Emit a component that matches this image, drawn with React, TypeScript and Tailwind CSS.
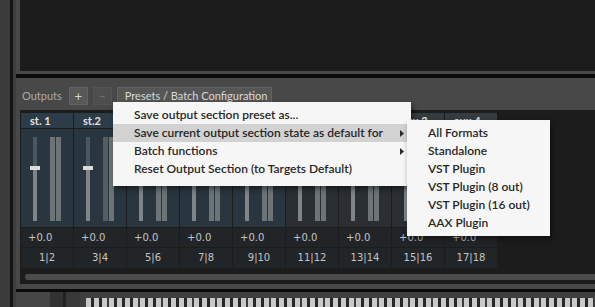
import React from 'react';

const channels = [
  { name: 'st. 1', out: '1|2', blue: true },
  { name: 'st.2', out: '3|4', blue: true },
  { name: 'st.3', out: '5|6', blue: true },
  { name: 'st.4', out: '7|8', blue: true },
  { name: 'st.5', out: '9|10', blue: true },
  { name: 'aux 1', out: '11|12', blue: false },
  { name: 'aux 2', out: '13|14', blue: false },
  { name: 'aux 3', out: '15|16', blue: false },
  { name: 'aux 4', out: '17|18', blue: false },
];

const menuItems = [
  { label: 'Save output section preset as...', sub: false },
  { label: 'Save current output section state as default for', sub: true, active: true },
  { label: 'Batch functions', sub: true },
  { label: 'Reset Output Section (to Targets Default)', sub: false },
];

const formats = ['All Formats', 'Standalone', 'VST Plugin', 'VST Plugin (8 out)', 'VST Plugin (16 out)', 'AAX Plugin'];

// one octave seen from the top: w = white, b = black key, g = thin gap
const octave = ['w', 'b', 'w', 'b', 'w', 'g', 'w', 'b', 'w', 'b', 'w', 'b', 'w', 'g'];

const Fader = ({ blue, dim }: { blue: boolean; dim?: boolean }) => (
  <div className={`flex h-[98px] pt-[8px] pl-[12px] ${blue ? 'bg-[#29363f]' : 'bg-[#2b2f33]'}`}>
    <div className="relative flex h-[84px] w-[4px] flex-col">
      <div className={`h-[30px] ${blue ? 'bg-[#4b575f]' : 'bg-[#55595c]'}`} />
      <div className="flex-1 bg-[#7e8487]" />
      <div className="absolute left-[-3px] top-[29px] h-[4px] w-[10px] bg-[#dcdcdc]" />
    </div>
    <div className="ml-[13px] flex h-[84px] gap-px">
      <div className={`w-[5px] ${dim ? 'bg-[#535d64]' : 'bg-[#6c7478]'}`} />
      <div className="w-[5px] bg-[#6c7478]" />
    </div>
  </div>
);

export default function App() {
  return (
    <div className="relative flex h-[307px] w-[595px] overflow-hidden bg-[#3a3a3a] font-['Lato',sans-serif]">
      <div className="w-[10px] shrink-0 bg-[#3b3b3b]" />
      <div className="w-[3px] shrink-0 bg-[#141414]" />
      <div className="flex min-w-0 flex-1 flex-col bg-[#3d3d3d] pl-[3px]">
        {/* top rack */}
        <div className="h-[74px] bg-[#484848] pb-[3px] pl-[4px]">
          <div className="h-full bg-[#1c1c1c]" />
        </div>
        <div className="h-[4px] bg-[#0b0b0b]" />

        {/* outputs section */}
        <div className="flex h-[211px] flex-col bg-[#484848]">
          <div className="flex h-[32px] items-start gap-[5px] pl-[6px] pt-[9px]">
            <span className="mr-[2px] whitespace-nowrap pt-[2px] text-[11px] leading-[14px] text-[#a9a9a9]">Outputs</span>
            <div className="flex h-[18px] w-[19px] shrink-0 items-center justify-center border border-[#626262] bg-[#585858] text-[13px] leading-none text-[#d6d6d6]">+</div>
            <div className="flex h-[18px] w-[19px] shrink-0 items-center justify-center border border-[#545454] bg-[#4e4e4e] text-[12px] leading-none text-[#777]">–</div>
            <div className="flex h-[19px] w-[155px] shrink-0 items-center whitespace-nowrap border border-[#626262] bg-[#565656] pl-[7px] text-[11px] text-[#d8d8d8]">
              Presets / Batch Configuration
              <svg className="ml-[7px]" width="7" height="4" viewBox="0 0 7 4"><path d="M0 0h7L3.5 4z" fill="#dcdcdc" /></svg>
            </div>
          </div>

          <div className="ml-[4px] flex h-[174px] flex-col bg-[#1c1c1c] pl-px pt-[3px]">
            <div className="grid w-[476px] grid-cols-[repeat(9,52px)] gap-x-px gap-y-px">
              {channels.map((c) => (
                <div key={c.name} className={`h-[15px] whitespace-nowrap pl-[9px] text-[11px] font-bold leading-[15px] text-[#e2e2e2] ${c.blue ? 'bg-[#2c3d49]' : 'bg-[#363b40]'}`}>{c.name}</div>
              ))}
              {channels.map((c, i) => (
                <Fader key={c.name + 'f'} blue={c.blue} dim={i === 1} />
              ))}
              {channels.map((c) => (
                <div key={c.name + 'v'} className="h-[19px] bg-[#222528] pl-[7px] font-['DejaVu_Sans',sans-serif] text-[10px] leading-[19px] text-[#c4c4c4]">+0.0</div>
              ))}
              {channels.map((c) => (
                <div key={c.name + 'o'} className="h-[20px] bg-[#222528] text-center font-['DejaVu_Sans',sans-serif] text-[10px] leading-[20px] text-[#c4c4c4]">{c.out}</div>
              ))}
            </div>
            <div className="mt-[6px] ml-[4px] h-[6px] rounded-l-full bg-[#4b4b4b]" />
          </div>
        </div>

        <div className="h-[3px] bg-[#0b0b0b]" />

        {/* keyboard strip */}
        <div className="flex flex-1">
          <div className="w-[34px] shrink-0 bg-[#464646]" />
          <div className="w-[13px] shrink-0 bg-[#333]" />
          <div className="w-[3px] shrink-0 bg-[#222]" />
          <div className="w-[14px] shrink-0 bg-[#383838]" />
          <div className="flex min-w-0 flex-1 flex-col bg-[#3f3f3f] pl-[6px] pt-[6px]">
            <div className="flex flex-1 overflow-hidden">
              {Array.from({ length: 10 }).flatMap((_, o) =>
                octave.map((k, j) => (
                  <div
                    key={`${o}-${j}`}
                    className={`shrink-0 ${k === 'w' ? 'w-[5px] bg-[#c9c9c9]' : k === 'b' ? 'w-[3px] bg-[#262626]' : 'w-[2px] bg-[#3a3a3a]'}`}
                  />
                ))
              )}
            </div>
          </div>
        </div>
      </div>

      {/* presets menu */}
      <div className="absolute left-[113px] top-[102px] w-[298px] bg-[#f6f6f6] pb-[8px] pt-[4px] shadow-[2px_3px_6px_rgba(0,0,0,0.45)]">
        {menuItems.map((m) => (
          <div key={m.label} className={`flex h-[18px] items-center pl-[21px] pr-[7px] text-[12px] font-semibold text-[#262626] ${m.active ? 'bg-[#d2d2d2]' : ''}`}>
            <span className="flex-1">{m.label}</span>
            {m.sub && (
              <svg width="4" height="7" viewBox="0 0 4 7"><path d="M0 0l4 3.5L0 7z" fill="#2a2a2a" /></svg>
            )}
          </div>
        ))}
      </div>

      {/* submenu */}
      <div className="absolute left-[407px] top-[120px] w-[143px] bg-[#f6f6f6] pb-[4px] pt-[4px] shadow-[2px_3px_6px_rgba(0,0,0,0.45)]">
        {formats.map((f) => (
          <div key={f} className="flex h-[18px] items-center pl-[21px] text-[12px] font-semibold text-[#262626]">{f}</div>
        ))}
      </div>
    </div>
  );
}
